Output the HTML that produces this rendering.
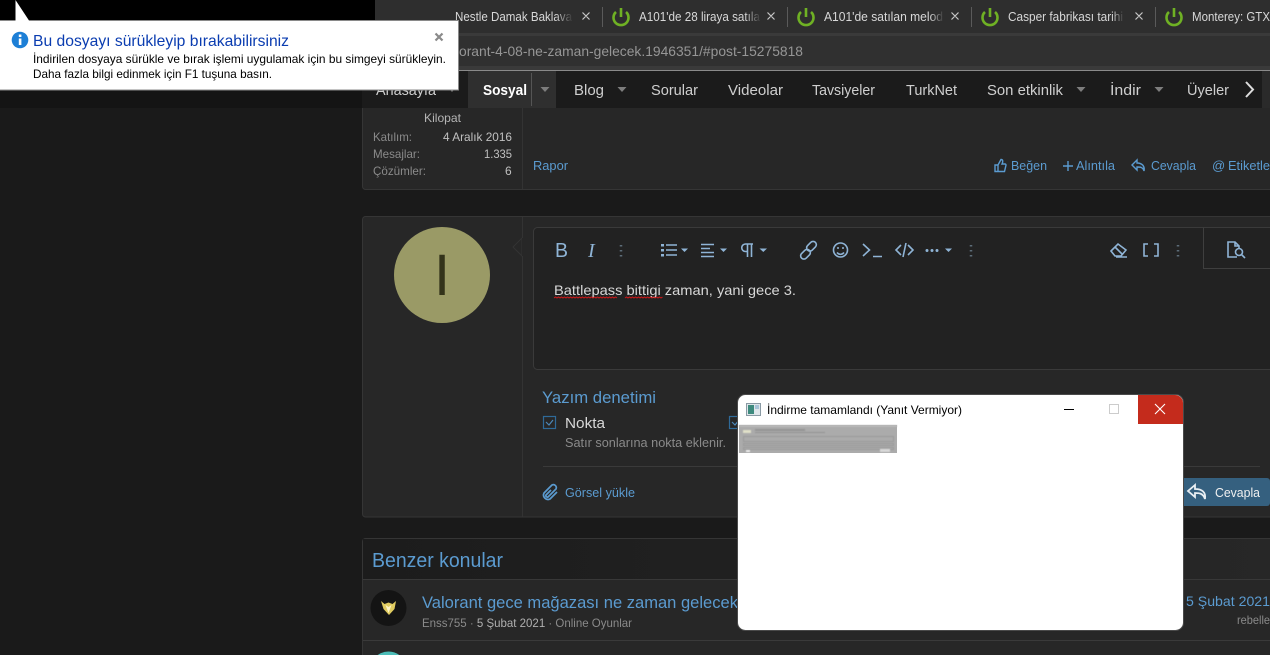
<!DOCTYPE html>
<html lang="tr"><head><meta charset="utf-8"><title>Ekran</title>
<style>
html,body{margin:0;padding:0;background:#1a1a1a;overflow:hidden;width:1270px;height:655px}
svg{display:block}
text{font-family:"Liberation Sans",sans-serif;white-space:pre}
.i{fill:none;stroke:#8fb4d6;stroke-width:1.6}
.l{fill:none;stroke:#5b9bd0;stroke-width:1.4}
.n{font-size:15px;fill:#cfcfcf}
.t{font-size:13px;fill:#d8d8d8}
.b{fill:#5b9bd0}
.g{fill:#8a8a8a}
</style></head><body>
<svg width="1270" height="655" viewBox="0 0 1270 655" xmlns="http://www.w3.org/2000/svg">
<defs>
<linearGradient id="h" x1="0" x2="1" y1="0" y2="0"><stop offset="0" stop-color="#1c1c1c"/><stop offset="1" stop-color="#272727"/></linearGradient>
<linearGradient id="f" x1="0" x2="1" y1="0" y2="0"><stop offset="0" stop-color="#2e2e2e" stop-opacity="0"/><stop offset="1" stop-color="#2e2e2e"/></linearGradient>
</defs>
<rect width="1270" height="655" fill="#1a1a1a"/>
<!-- top chrome -->
<rect width="1270" height="70" fill="#000"/>
<rect x="375" width="895" height="33" fill="#2e2e2e"/>
<rect x="375" y="33" width="895" height="37" fill="#3a3a3a"/>
<rect x="375" y="36" width="895" height="30" fill="#303030"/>
<rect x="375" y="70" width="895" height="1" fill="#8a8a8a"/>
<!-- tabs -->
<text x="455" y="21" class="t" textLength="117" lengthAdjust="spacingAndGlyphs">Nestle Damak Baklava</text>
<rect x="555" y="5" width="18" height="24" fill="url(#f)"/>
<text x="639" y="21" class="t" textLength="121" lengthAdjust="spacingAndGlyphs">A101'de 28 liraya satıla</text>
<rect x="745" y="5" width="16" height="24" fill="url(#f)"/>
<text x="824" y="21" class="t" textLength="119" lengthAdjust="spacingAndGlyphs">A101'de satılan melod</text>
<rect x="930" y="5" width="14" height="24" fill="url(#f)"/>
<text x="1008" y="21" class="t" textLength="115" lengthAdjust="spacingAndGlyphs">Casper fabrikası tarihi</text>
<rect x="1112" y="5" width="12" height="24" fill="url(#f)"/>
<text x="1192" y="21" class="t" textLength="78" lengthAdjust="spacingAndGlyphs">Monterey: GTX</text>
<g fill="none" stroke="#c8c8c8" stroke-width="1.2">
<path d="M582.500 12.500l7 7M589.500 12.500l-7 7M767.500 12.500l7 7M774.500 12.500l-7 7M951.500 12.500l7 7M958.500 12.500l-7 7M1135.500 12.500l7 7M1142.500 12.500l-7 7"/>
</g>
<path d="M602.500 7v20M787.500 7v20M971.500 7v20M1155.500 7v20" stroke="#5a5a5a" fill="none"/>
<g fill="none" stroke="#6fb124" stroke-width="2.600">
<path d="M616 12a7.500 7.500 0 1 0 10 0M621 8v9"/>
<path d="M801 12a7.500 7.500 0 1 0 10 0M806 8v9"/>
<path d="M985 12a7.500 7.500 0 1 0 10 0M990 8v9"/>
<path d="M1169 12a7.500 7.500 0 1 0 10 0M1174 8v9"/>
</g>
<text x="459" y="56" font-size="14" fill="#969696" textLength="344" lengthAdjust="spacingAndGlyphs">orant-4-08-ne-zaman-gelecek.1946351/#post-15275818</text>
<!-- nav -->
<rect y="71" width="1270" height="37" fill="#1b1b1b"/>
<rect x="0" y="71" width="362" height="37" fill="#141414"/>
<rect x="468" y="71" width="88" height="37" fill="#2f2f2f"/>
<text x="376" y="95" class="n" textLength="60" lengthAdjust="spacingAndGlyphs">Anasayfa</text>
<text x="483" y="95" font-size="15" font-weight="700" fill="#fff" textLength="44" lengthAdjust="spacingAndGlyphs">Sosyal</text>
<rect x="531" y="73" width="1" height="33" fill="#555"/>
<text x="574" y="95" class="n" textLength="30" lengthAdjust="spacingAndGlyphs">Blog</text>
<text x="651" y="95" class="n" textLength="47" lengthAdjust="spacingAndGlyphs">Sorular</text>
<text x="728" y="95" class="n" textLength="55" lengthAdjust="spacingAndGlyphs">Videolar</text>
<text x="812" y="95" class="n" textLength="63" lengthAdjust="spacingAndGlyphs">Tavsiyeler</text>
<text x="906" y="95" class="n" textLength="51" lengthAdjust="spacingAndGlyphs">TurkNet</text>
<text x="987" y="95" class="n" textLength="76" lengthAdjust="spacingAndGlyphs">Son etkinlik</text>
<text x="1110" y="95" class="n" textLength="31" lengthAdjust="spacingAndGlyphs">İndir</text>
<text x="1187" y="95" class="n" textLength="42" lengthAdjust="spacingAndGlyphs">Üyeler</text>
<path d="M540.500 87h9l-4.500 5zM617.500 87h9l-4.500 5zM1076.500 87h9l-4.500 5zM1154.500 87h9l-4.500 5zM447.500 87h9l-4.500 5z" fill="#7d7d7d"/>
<rect x="1262" y="71" width="8" height="37" fill="#2a2a2a"/>
<path d="M1246 82l7 7.500-7 7.500" fill="none" stroke="#ddd" stroke-width="2"/>
<!-- post block -->
<path d="M1270 189.500H365.500a3 3 0 0 1-3-3V108H1270z" fill="#272727"/>
<path d="M1270 189.500H365.500a3 3 0 0 1-3-3V108" fill="none" stroke="#353535"/>
<rect x="522" y="108" width="1" height="81" fill="#333"/>
<text x="424" y="122" font-size="12" fill="#b5b5b5" textLength="37" lengthAdjust="spacingAndGlyphs">Kilopat</text>
<text x="373" y="141" font-size="12" class="g" textLength="39" lengthAdjust="spacingAndGlyphs">Katılım:</text>
<text x="373" y="158" font-size="12" class="g" textLength="47" lengthAdjust="spacingAndGlyphs">Mesajlar:</text>
<text x="373" y="175" font-size="12" class="g" textLength="53" lengthAdjust="spacingAndGlyphs">Çözümler:</text>
<text x="443" y="141" font-size="12" fill="#c0c0c0" textLength="69" lengthAdjust="spacingAndGlyphs">4 Aralık 2016</text>
<text x="484" y="158" font-size="12" fill="#c0c0c0" textLength="28" lengthAdjust="spacingAndGlyphs">1.335</text>
<text x="505" y="175" font-size="12" fill="#c0c0c0">6</text>
<text x="533" y="170" font-size="13" class="b" textLength="35" lengthAdjust="spacingAndGlyphs">Rapor</text>
<path class="l" d="M995 165h3v6.500h-3zM998 165l3-5.500c2 0 2.200 2 1 4.500h3c1 0 1.200 1 .8 2l-1.300 5.500h-6.500"/>
<text x="1011" y="170" font-size="13" class="b" textLength="36" lengthAdjust="spacingAndGlyphs">Beğen</text>
<path class="l" d="M1063 166h10M1068 161v10"/>
<text x="1076" y="170" font-size="13" class="b" textLength="39" lengthAdjust="spacingAndGlyphs">Alıntıla</text>
<path class="l" d="M1137 160l-5 5 5 5v-3c3 0 6 0 7 4 1-5-2-8-7-8z"/>
<text x="1151" y="170" font-size="13" class="b" textLength="45" lengthAdjust="spacingAndGlyphs">Cevapla</text>
<text x="1212" y="170" font-size="13" class="b">@</text>
<text x="1228" y="170" font-size="13" class="b" textLength="42" lengthAdjust="spacingAndGlyphs">Etiketle</text>
<!-- editor block -->
<path d="M1270 216.500H365.500a3 3 0 0 0-3 3V514a3 3 0 0 0 3 3H1270z" fill="#272727"/>
<path d="M1270 216.500H365.500a3 3 0 0 0-3 3V514a3 3 0 0 0 3 3H1270" fill="none" stroke="#353535"/>
<rect x="522" y="217" width="1" height="300" fill="#333"/>
<path d="M522 238l-9 9 9 9z" fill="#272727" stroke="#333"/>
<rect x="522" y="238" width="2" height="18" fill="#272727"/>
<circle cx="442" cy="275" r="48" fill="#9a9a66"/>
<text x="442" y="295" font-size="58" text-anchor="middle" fill="#33331a">I</text>
<path d="M1270 227.500H537.500a4 4 0 0 0-4 4V365.500a4 4 0 0 0 4 4H1270z" fill="#222"/>
<path d="M1270 227.500H537.500a4 4 0 0 0-4 4V365.500a4 4 0 0 0 4 4H1270" fill="none" stroke="#3a3a3a"/>
<!-- toolbar -->
<text x="555" y="257" font-size="20" fill="#8fb4d6" textLength="13" lengthAdjust="spacingAndGlyphs">B</text>
<text x="588" y="257" font-size="20" font-style="italic" fill="#8fb4d6" style="font-family:'Liberation Serif',serif">I</text>
<path d="M621 245v1.500M621 250v1.500M621 255v1.500M971 245v1.500M971 250v1.500M971 255v1.500M1178 245v1.500M1178 250v1.500M1178 255v1.500" stroke="#5c6c78" stroke-width="2.500" fill="none"/>
<path class="i" d="M666 245h11M666 250h11M666 255h11M701 244.500h13M701 248.500h9M701 252.500h13M701 256.500h13"/>
<path d="M661 244h3v2.500h-3zM661 249h3v2.500h-3zM661 254h3v2.500h-3z" fill="#8fb4d6"/>
<path d="M681 248.500h7l-3.500 3.500zM720 248.500h7l-3.500 3.500zM759.500 248.500h7.500l-3.700 3.500zM945 248.500h7l-3.500 3.500z" fill="#8fb4d6"/>
<path class="i" d="M747.500 244v13M751.500 244v13M753 244h-7.500a3.700 3.700 0 0 0 0 7.500h2"/>
<rect x="806" y="243" width="11" height="6.500" rx="3.200" transform="rotate(-45 811.500 246.250)" fill="none" stroke="#8fb4d6" stroke-width="1.600"/>
<rect x="800" y="251" width="11" height="6.500" rx="3.200" transform="rotate(-45 805.500 254.250)" fill="none" stroke="#8fb4d6" stroke-width="1.600"/>
<circle class="i" cx="840.500" cy="250" r="7"/>
<path class="i" d="M837 252.500c2 2.500 5 2.500 7 0"/>
<circle cx="838" cy="248" r="1" fill="#8fb4d6"/><circle cx="843" cy="248" r="1" fill="#8fb4d6"/>
<path class="i" d="M863 244l6.500 6-6.500 6M873 256.500h9"/>
<path class="i" d="M901 245l-5 5 5 5M908 245l5 5-5 5M906 243l-3 14"/>
<circle cx="927" cy="250.500" r="1.500" fill="#8fb4d6"/><circle cx="932" cy="250.500" r="1.500" fill="#8fb4d6"/><circle cx="937" cy="250.500" r="1.500" fill="#8fb4d6"/>
<path class="i" d="M1111 251l7-7 8 6-5 6h-6zM1115 247l7 7M1116 257h11"/>
<path class="i" d="M1148 244h-4v12h4M1154 244h4v12h-4"/>
<path d="M1203.500 227.500v41H1270" fill="none" stroke="#3f3f3f"/>
<path class="i" d="M1237 257h-9v-15h7l4 4v2M1235 242v4h4"/>
<circle class="i" cx="1239" cy="252" r="3.500"/>
<path class="i" d="M1241.500 254.500l3.500 3.500"/>
<text x="554" y="295" font-size="14" fill="#d8d8d8" textLength="242" lengthAdjust="spacingAndGlyphs">Battlepass bittigi zaman, yani gece 3.</text>
<path d="M554 298l1.500-1 1.500 1 1.500-1 1.500 1 1.500-1 1.500 1 1.500-1 1.500 1 1.500-1 1.500 1 1.500-1 1.500 1 1.500-1 1.500 1 1.500-1 1.500 1 1.500-1 1.500 1 1.500-1 1.500 1 1.500-1 1.500 1 1.500-1 1.500 1 1.500-1 1.500 1 1.500-1 1.500 1 1.500-1 1.500 1 1.500-1 1.500 1 1.500-1 1.500 1 1.500-1 1.500 1 1.500-1 1.500 1 1.500-1 1.500 1 1.500-1 1.500 1M625 298l1.500-1 1.500 1 1.500-1 1.500 1 1.500-1 1.500 1 1.500-1 1.500 1 1.500-1 1.500 1 1.500-1 1.500 1 1.500-1 1.500 1 1.500-1 1.500 1 1.500-1 1.500 1 1.500-1 1.500 1 1.500-1 1.500 1 1.500-1 1.500 1 1.500-1" fill="none" stroke="#d01818"/>
<text x="542" y="403" font-size="17" class="b" textLength="114" lengthAdjust="spacingAndGlyphs">Yazım denetimi</text>
<rect x="543.500" y="416.500" width="12" height="12" fill="none" stroke="#2f6a99" stroke-width="1.200"/>
<path d="M546 422l3 3 4-5" fill="none" stroke="#4d88b8" stroke-width="1.200"/>
<text x="565" y="428" font-size="15" fill="#d8d8d8" textLength="40" lengthAdjust="spacingAndGlyphs">Nokta</text>
<text x="565" y="447" font-size="12.500" fill="#8a8a8a" textLength="161" lengthAdjust="spacingAndGlyphs">Satır sonlarına nokta eklenir.</text>
<rect x="729.500" y="416.500" width="12" height="12" fill="none" stroke="#2f6a99" stroke-width="1.200"/>
<path d="M732 422l3 3 4-5" fill="none" stroke="#4d88b8" stroke-width="1.200"/>
<rect x="543" y="466" width="717" height="1" fill="#3a3a3a"/>
<path d="M551 490l-5 5a1.500 1.500 0 0 0 2 2l8-8a3 3 0 0 0-4-4l-8 8a4.500 4.500 0 0 0 6 6l7-7" fill="none" stroke="#5b9bd0" stroke-width="1.700"/>
<text x="565" y="497" font-size="13" class="b" textLength="70" lengthAdjust="spacingAndGlyphs">Görsel yükle</text>
<path d="M1170 478h97a3 3 0 0 1 3 3v22a3 3 0 0 1-3 3h-97z" fill="#35607f"/>
<path d="M1195 485l-7 6 7 6v-4c4 0 8 0 10 6 1-7-3-10-10-10z" fill="none" stroke="#e8eef3" stroke-width="1.800"/>
<text x="1215" y="497" font-size="13" fill="#f0f0f0" textLength="45" lengthAdjust="spacingAndGlyphs">Cevapla</text>
<!-- similar -->
<path d="M1270 538.500H365.500a3 3 0 0 0-3 3V655H1270z" fill="#272727"/>
<path d="M1270 538.500H365.500a3 3 0 0 0-3 3V655" fill="none" stroke="#353535"/>
<rect x="363" y="539" width="907" height="40" fill="url(#h)"/>
<rect x="363" y="579" width="907" height="1" fill="#383838"/>
<text x="372" y="567" font-size="20" class="b" textLength="131" lengthAdjust="spacingAndGlyphs">Benzer konular</text>
<circle cx="388.500" cy="608" r="18" fill="#141414"/>
<path d="M381 601l3.500 3 4-1.500 4 1.500 3.500-3-1.500 8-5.500 6-5.500-6z" fill="#e0cc60"/>
<path d="M385.500 605l3 8 3-8-3 2z" fill="#fff6c8"/>
<text x="422" y="608" font-size="17" class="b" textLength="316" lengthAdjust="spacingAndGlyphs">Valorant gece mağazası ne zaman gelecek</text>
<text x="422" y="627" font-size="12" class="g" textLength="210" lengthAdjust="spacingAndGlyphs">Enss755 · <tspan fill="#b0b0b0">5 Şubat 2021</tspan> · Online Oyunlar</text>
<text x="1186" y="606" font-size="14" class="b" textLength="84" lengthAdjust="spacingAndGlyphs">5 Şubat 2021</text>
<text x="1237" y="624" font-size="12" class="g" textLength="33" lengthAdjust="spacingAndGlyphs">rebelle</text>
<rect x="363" y="640" width="907" height="1" fill="#3a3a3a"/>
<path d="M377.700 655A18.500 18.500 0 0 1 399.300 655Z" fill="#4cbdb8"/>
<!-- window -->
<rect x="737.500" y="394.500" width="446" height="236" rx="8" fill="#fff" stroke="#4a4a4a"/>
<path d="M1138 395h37a8 8 0 0 1 8 8v21h-45z" fill="#c42b1c"/>
<path d="M1155 404l10 10M1165 404l-10 10" stroke="#fff" stroke-width="1.100" fill="none"/>
<rect x="1064" y="409" width="10" height="1" fill="#000"/>
<rect x="1109.500" y="404.500" width="9" height="9" fill="none" stroke="#ccc"/>
<rect x="746.500" y="403.500" width="14" height="12" fill="#dfe6ea" stroke="#8a9aa4"/>
<rect x="748" y="405" width="6" height="9" fill="#3e8a7e"/>
<rect x="755" y="405" width="4" height="4" fill="#a8c4d8"/>
<text x="767" y="414" font-size="12" fill="#000" textLength="195" lengthAdjust="spacingAndGlyphs">İndirme tamamlandı (Yanıt Vermiyor)</text>
<rect x="739" y="425" width="158" height="28" fill="#ababab"/>
<g style="filter:blur(.4px)">
<rect x="739" y="425" width="158" height="2" fill="#b8b8b8"/>
<rect x="743" y="430" width="8" height="3" fill="#e0e0c8"/>
<rect x="755" y="429" width="50" height="2" fill="#949494"/>
<rect x="755" y="432" width="70" height="1" fill="#949494"/>
<g fill="none" stroke="#9a9a9a"><rect x="743.500" y="436.500" width="150" height="5"/><rect x="743.500" y="443.500" width="150" height="2"/><rect x="743.500" y="447.500" width="150" height="2"/></g>
<rect x="880" y="449" width="10" height="3" fill="#d8d8d8"/>
<rect x="746" y="450" width="4" height="2" fill="#eee"/>
</g>
<!-- notification -->
<path d="M0 20.500h15.500V0L29 20.500h429.500v69.500H0z" fill="#fff"/>
<path d="M0 20.500h15.500M29 20.500h429.500v69.500H0" fill="none" stroke="#8a8a8a"/>
<circle cx="20" cy="40" r="8.300" fill="#1d7fd6"/>
<rect x="18.800" y="38.500" width="2.600" height="6.500" fill="#fff"/>
<rect x="18.800" y="34.500" width="2.600" height="2.500" fill="#fff"/>
<text x="33" y="46" font-size="16" fill="#0a3cb0" textLength="256" lengthAdjust="spacingAndGlyphs">Bu dosyayı sürükleyip bırakabilirsiniz</text>
<text x="33" y="63" font-size="12" fill="#000" textLength="413" lengthAdjust="spacingAndGlyphs">İndirilen dosyaya sürükle ve bırak işlemi uygulamak için bu simgeyi sürükleyin.</text>
<text x="33" y="78" font-size="12" fill="#000" textLength="239" lengthAdjust="spacingAndGlyphs">Daha fazla bilgi edinmek için F1 tuşuna basın.</text>
<path d="M435.500 33.500l7 7M442.500 33.500l-7 7" stroke="#8a8a8a" stroke-width="2.200" fill="none"/>
</svg>
</body></html>
